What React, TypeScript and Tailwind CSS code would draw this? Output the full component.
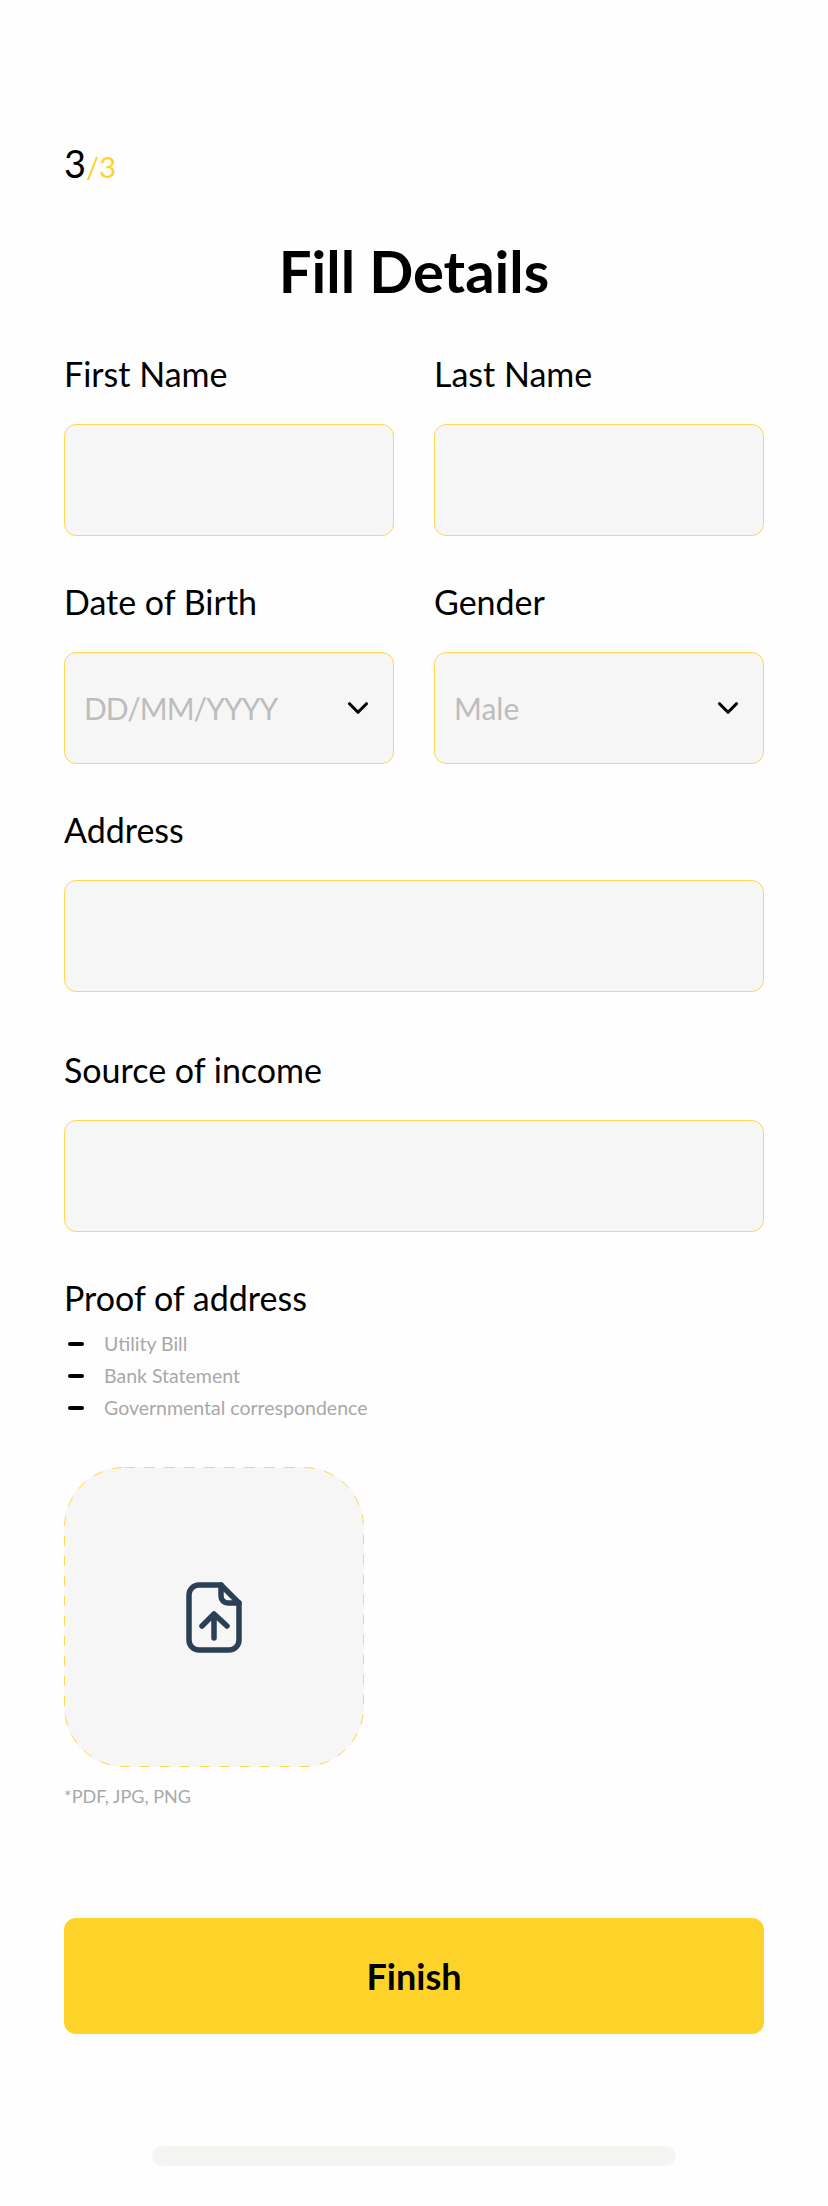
import { ChevronDown } from "lucide-react";

function Field({ label, children }: { label: string; children?: React.ReactNode }) {
  return (
    <div className="min-w-0 flex-1">
      <label className="block h-[40px] text-[34px] leading-[40px] text-black">{label}</label>
      <div className="mt-[30px] flex h-[112px] items-center justify-between rounded-[12px] border border-[#ffd84f] bg-[#f6f6f6] pl-[19px] pr-[18px]">
        {children}
      </div>
    </div>
  );
}

export default function App() {
  const documents = ["Utility Bill", "Bank Statement", "Governmental correspondence"];

  return (
    <div className="flex min-h-[2206px] flex-col bg-[#fefefe] px-[64px] font-['Lato',sans-serif] text-black">
      <div className="mt-[141px] flex h-[44px] items-baseline text-[38px] leading-[44px]">
        3<span className="text-[29px] text-[#fed329]">/3</span>
      </div>

      <h1 className="mt-[56px] h-[60px] text-center text-[58px] leading-[60px] font-bold">Fill Details</h1>

      <div className="mt-[53px] flex gap-[40px]">
        <Field label="First Name" />
        <Field label="Last Name" />
      </div>

      <div className="mt-[46px] flex gap-[40px]">
        <Field label="Date of Birth">
          <span className="text-[30px] tracking-[-1px] text-[#bdbdbd]">DD/MM/YYYY</span>
          <ChevronDown size={34} strokeWidth={2.2} className="text-black" />
        </Field>
        <Field label="Gender">
          <span className="text-[30px] text-[#bdbdbd]">Male</span>
          <ChevronDown size={34} strokeWidth={2.2} className="text-black" />
        </Field>
      </div>

      <div className="mt-[46px] flex">
        <Field label="Address" />
      </div>

      <div className="mt-[58px] flex">
        <Field label="Source of income" />
      </div>

      <div className="mt-[46px] h-[40px] text-[34px] leading-[40px]">Proof of address</div>

      <ul className="mt-[12px] flex flex-col gap-[4px]">
        {documents.map((doc) => (
          <li key={doc} className="flex h-[28px] items-center text-[19.5px] text-[#a8a8a8]">
            <span className="ml-[4px] mr-[20px] h-[4px] w-[16px] rounded-full bg-black" />
            {doc}
          </li>
        ))}
      </ul>

      <div className="relative mt-[45px] flex h-[300px] w-[300px] items-center justify-center rounded-[60px] bg-[#f6f6f6]">
        <svg className="absolute inset-0" width="300" height="300" fill="none">
          <rect x="0.5" y="0.5" width="299" height="299" rx="60" stroke="#ffd84f" strokeDasharray="10 10" />
        </svg>
        <svg width="56" height="71" viewBox="0 0 56 71" fill="none" stroke="#2b3f56" strokeWidth="5.5" strokeLinecap="round" strokeLinejoin="round">
          <path d="M35 3H13A10 10 0 0 0 3 13V58A10 10 0 0 0 13 68H43A10 10 0 0 0 53 58V21Z" />
          <path d="M35 3V14A7 7 0 0 0 42 21H53" />
          <path d="M28 56V32M16 44L28 32L41 44" />
        </svg>
      </div>

      <div className="mt-[17px] h-[24px] text-[18px] leading-[24px] text-[#a8a8a8]">*PDF, JPG, PNG</div>

      <button
        type="button"
        className="mt-[110px] h-[116px] w-full rounded-[12px] bg-[#fed329] text-[36px] font-bold text-black"
      >
        Finish
      </button>

      <div className="mx-auto mt-[112px] h-[20px] w-[524px] rounded-[10px] bg-[#f5f5f3]" />
    </div>
  );
}
